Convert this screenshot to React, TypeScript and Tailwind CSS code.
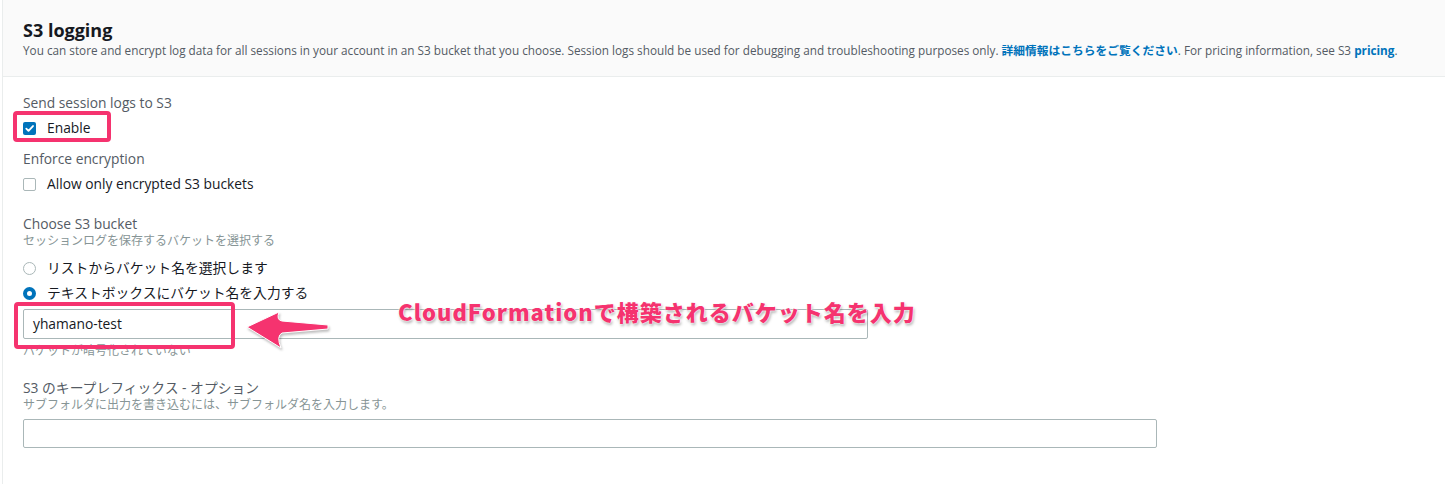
import React from 'react'

const font = { fontFamily: '"Open Sans", "Noto Sans CJK JP", sans-serif' }

function CheckBox({ checked }: { checked?: boolean }) {
  if (checked) {
    return (
      <span className="w-[13px] h-[13px] rounded-[2px] bg-[#0073bb] flex items-center justify-center">
        <svg className="w-[11px] h-[11px]" viewBox="0 0 12 12" fill="none" stroke="white" strokeWidth={2}>
          <path d="M2.5 6.2l2.4 2.4L9.8 3.3" strokeLinecap="round" strokeLinejoin="round" />
        </svg>
      </span>
    )
  }
  return <span className="w-[13px] h-[13px] rounded-[2px] border border-[#aab7b8] bg-white" />
}

function Radio({ checked }: { checked?: boolean }) {
  if (checked) {
    return <span className="w-[13px] h-[13px] rounded-full border-[4px] border-[#0073bb] bg-white" />
  }
  return <span className="w-[13px] h-[13px] rounded-full border border-[#aab7b8] bg-white" />
}

export default function App() {
  return (
    <div className="relative w-[1445px] h-[484px] bg-white overflow-hidden" style={font}>
      <div className="ml-[2px] h-full border-l border-[#eaeded] flex flex-col">
        {/* Header */}
        <div className="bg-[#fafafa] border-b border-[#eaeded] pl-[20px] pt-[18px] pb-[18px]">
          <h2 className="h-6 leading-6 text-[18px] font-bold text-[#16191f]">S3 logging</h2>
          <p className="h-4 leading-4 text-[11.75px] text-[#545b64] whitespace-nowrap">
            You can store and encrypt log data for all sessions in your account in an S3 bucket that you choose. Session logs should be used for debugging and troubleshooting purposes only.{' '}
            <span className="text-[#0073bb] font-bold">詳細情報はこちらをご覧ください</span>. For pricing information, see S3{' '}
            <span className="text-[#0073bb] font-bold">pricing</span>.
          </p>
        </div>

        {/* Body */}
        <div className="flex flex-col pl-[20px] pt-[16px] text-[13.8px] text-[#545b64]">
          <div className="h-5 leading-5">Send session logs to S3</div>
          <div className="mt-[5px] h-5 flex items-center gap-[11px] text-[#16191f]">
            <CheckBox checked />
            <span>Enable</span>
          </div>

          <div className="mt-[11px] h-5 leading-5">Enforce encryption</div>
          <div className="mt-[5px] h-5 flex items-center gap-[11px] text-[#16191f]">
            <CheckBox />
            <span>Allow only encrypted S3 buckets</span>
          </div>

          <div className="mt-[20px] h-5 leading-5">Choose S3 bucket</div>
          <div className="h-[14px] leading-[14px] text-[12px] text-[#879596]">セッションログを保存するバケットを選択する</div>
          <div className="mt-[10px] h-5 flex items-center gap-[11px] text-[#16191f]">
            <Radio />
            <span>リストからバケット名を選択します</span>
          </div>
          <div className="mt-[5px] h-5 flex items-center gap-[11px] text-[#16191f]">
            <Radio checked />
            <span>テキストボックスにバケット名を入力する</span>
          </div>
          <div className="mt-[6px] h-[30px] w-[845px] border border-[#aab7b8] rounded-[2px] flex items-center pl-[9px] text-[#16191f]">
            yhamano-test
          </div>
          <div className="mt-[5px] h-[14px] leading-[14px] text-[12px] text-[#879596]">バケットが暗号化されていない</div>

          <div className="mt-[20px] h-5 leading-5">S3 のキープレフィックス - オプション</div>
          <div className="h-[14px] leading-[14px] text-[12px] text-[#879596]">サブフォルダに出力を書き込むには、サブフォルダ名を入力します。</div>
          <div className="mt-[7px] h-[29px] w-[1134px] border border-[#aab7b8] rounded-[2px] bg-white" />
        </div>
      </div>

      {/* Annotations */}
      <div className="absolute left-[13px] top-[111px] w-[98px] h-[31px] border-[4px] border-[#f5336f] rounded-[4px]" />
      <div className="absolute left-[14px] top-[302px] w-[221px] h-[47px] border-[4px] border-[#f5336f] rounded-[4px]" />
      <svg className="absolute left-[240px] top-[305px] w-[100px] h-[50px] drop-shadow-[1px_2px_1px_rgba(0,0,0,0.25)]" viewBox="0 0 100 50">
        <path d="M7 22 L39 7 Q36 15 42 16 L88 20 L88 24 L42 28 Q36 31 41 43 Z" fill="#f5336f" stroke="white" strokeWidth={1} />
      </svg>
      <div
        className="absolute left-[398px] top-[297px] text-[22px] leading-[28px] font-black tracking-[1px] text-[#f5336f] whitespace-nowrap [text-shadow:0_0_2px_#fff,0_0_2px_#fff,1px_2px_3px_rgba(0,0,0,0.35)]"
        style={{ fontFamily: '"Noto Sans CJK JP", sans-serif' }}
      >
        CloudFormationで構築されるバケット名を入力
      </div>
    </div>
  )
}
